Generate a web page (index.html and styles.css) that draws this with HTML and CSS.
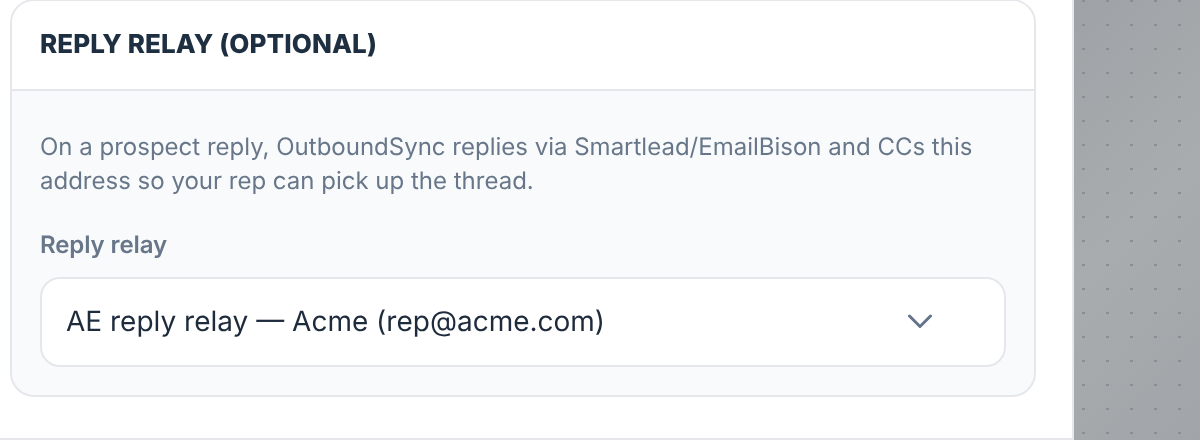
FILE: index.html
```html
<!DOCTYPE html>
<html lang="en">
<head>
<meta charset="utf-8">
<title>Reply relay</title>
<link rel="stylesheet" href="styles.css">
</head>
<body>
<div class="app">
  <main class="panel">
    <section class="card">
      <header class="card-head"><h2 class="card-title">REPLY RELAY (OPTIONAL)</h2></header>
      <div class="card-body">
        <p class="help">On a prospect reply, OutboundSync replies via Smartlead/EmailBison and CCs this address so your rep can pick up the thread.</p>
        <div class="label">Reply relay</div>
        <div class="select">
          <span class="select-value">AE reply relay — Acme (rep@acme.com)</span>
          <svg class="chevron" width="24" height="16" viewBox="0 0 24 16" fill="none" stroke="#64748b" stroke-width="3" stroke-linecap="round" stroke-linejoin="round"><path d="M1.500 2 12 12.500 22.500 2"/></svg>
        </div>
      </div>
    </section>
  </main>
  <aside class="backdrop"></aside>
</div>
</body>
</html>
```
FILE: styles.css
```css
* { box-sizing: border-box; }
html, body { margin: 0; height: 100%; background: #fff; overflow: hidden; }
body { font-family: Inter, "Liberation Sans", sans-serif; text-rendering: geometricPrecision; }
.app { display: flex; width: 1200px; height: 440px; }
.panel {
  width: 1074px; height: 440px; flex: none;
  padding: 0 36px 0 10px;
  background: #fff;
  border-right: 2px solid #e5e7eb;
  border-bottom: 2px solid #e5e7eb;
}
.card {
  height: 398px;
  margin-top: -1px;
  border: 2px solid #e5e7eb;
  border-radius: 24px;
  overflow: hidden;
  background: #f9fafc;
}
.card-head {
  height: 90px;
  padding: 0 28px;
  display: flex; align-items: center;
  background: #fff;
  border-bottom: 2px solid #e5e7eb;
}
.card-title {
  margin: 0;
  font-size: 26px; line-height: 32px; font-weight: 800;
  letter-spacing: 0.1px;
  color: #1e2f42;
  will-change: opacity;
}
.card-body { padding: 39px 28px 0; }
.help {
  margin: 0;
  font-size: 24px; line-height: 34px;
  color: #677789;
  will-change: opacity;
}
.label {
  margin-top: 31px;
  font-size: 24px; line-height: 32px; font-weight: 600;
  letter-spacing: -0.1px;
  color: #677789;
  will-change: opacity;
}
.select {
  margin-top: 16px;
  height: 90px;
  padding: 0 72px 0 24px;
  display: flex; align-items: center; justify-content: space-between;
  background: #fff;
  border: 2px solid #e5e7eb;
  border-radius: 20px;
}
.select-value {
  margin-top: -2px;
  font-size: 28px; line-height: 34px;
  color: #1e2b3c;
  will-change: opacity;
}
.backdrop {
  flex: 1;
  background-color: #a3a7ab;
  background-image:
    radial-gradient(circle at 9.5px 0.5px, #8a8e94 1.5px, transparent 2px),
    linear-gradient(135deg, #9fa3a7, #a8acaf 50%, #a1a5a9);
  background-size: 24px 24px, 100% 100%;
}
```
